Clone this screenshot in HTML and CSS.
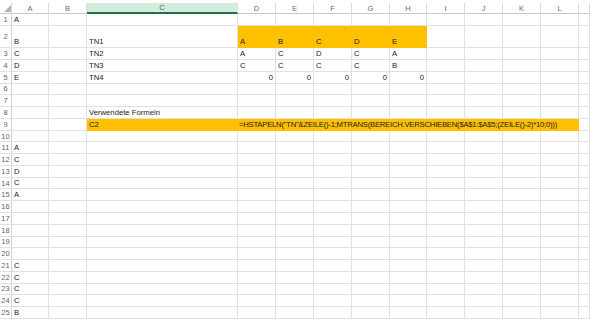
FILE: index.html
```html
<!DOCTYPE html>
<html>
    <head>
        <title>Tabelle1</title>
        <link rel="stylesheet" href="styles.css">
    </head>

    <body>
        <div class="wrap">
            <table class="sheet">
                <colgroup>
                    <col class="w-rh">
                    <col class="w37"><col class="w38"><col class="w151">
                    <col class="w38"><col class="w38"><col class="w38"><col class="w38"><col class="w37">
                    <col class="w38"><col class="w38"><col class="w38"><col class="w38">
                    <col class="w-rest">
                </colgroup>

                <!-- Spaltenköpfe -->
                <tr class="head">
                    <th class="corner">
                        <svg width="7" height="7" viewBox="0 0 7 7"><polygon points="7,0 7,7 0,7" fill="#b4b4b4"/></svg>
                    </th>
                    <th>A</th><th>B</th><th class="sel">C</th><th>D</th><th>E</th><th>F</th>
                    <th>G</th><th>H</th><th>I</th><th>J</th><th>K</th><th>L</th><th></th>
                </tr>

                <tr class="r1"><th>1</th><td>A</td><td></td><td></td><td></td><td></td><td></td><td></td><td></td><td></td><td></td><td></td><td></td><td></td></tr>
                <tr class="r2"><th>2</th><td>B</td><td></td><td>TN1</td>
                    <td class="fill">A</td><td class="fill">B</td><td class="fill">C</td><td class="fill">D</td><td class="fill">E</td>
                    <td></td><td></td><td></td><td></td><td></td></tr>
                <tr><th>3</th><td>C</td><td></td><td>TN2</td><td>A</td><td>C</td><td>D</td><td>C</td><td>A</td><td></td><td></td><td></td><td></td><td></td></tr>
                <tr><th>4</th><td>D</td><td></td><td>TN3</td><td>C</td><td>C</td><td>C</td><td>C</td><td>B</td><td></td><td></td><td></td><td></td><td></td></tr>
                <tr><th>5</th><td>E</td><td></td><td>TN4</td>
                    <td class="num">0</td><td class="num">0</td><td class="num">0</td><td class="num">0</td><td class="num">0</td>
                    <td></td><td></td><td></td><td></td><td></td></tr>
                <tr><th>6</th><td></td><td></td><td></td><td></td><td></td><td></td><td></td><td></td><td></td><td></td><td></td><td></td><td></td></tr>
                <tr><th>7</th><td></td><td></td><td></td><td></td><td></td><td></td><td></td><td></td><td></td><td></td><td></td><td></td><td></td></tr>
                <tr><th>8</th><td></td><td></td><td>Verwendete Formeln</td><td></td><td></td><td></td><td></td><td></td><td></td><td></td><td></td><td></td><td></td></tr>
                <tr><th>9</th><td></td><td></td><td class="fill">C2</td>
                    <td class="fill formula">=HSTAPELN("TN"&amp;ZEILE()-1;MTRANS(BEREICH.VERSCHIEBEN($A$1:$A$5;(ZEILE()-2)*10;0)))</td>
                    <td class="fill"></td><td class="fill"></td><td class="fill"></td><td class="fill"></td>
                    <td class="fill"></td><td class="fill"></td><td class="fill"></td><td class="fill"></td><td></td></tr>
                <tr><th>10</th><td></td><td></td><td></td><td></td><td></td><td></td><td></td><td></td><td></td><td></td><td></td><td></td><td></td></tr>
                <tr><th>11</th><td>A</td><td></td><td></td><td></td><td></td><td></td><td></td><td></td><td></td><td></td><td></td><td></td><td></td></tr>
                <tr><th>12</th><td>C</td><td></td><td></td><td></td><td></td><td></td><td></td><td></td><td></td><td></td><td></td><td></td><td></td></tr>
                <tr><th>13</th><td>D</td><td></td><td></td><td></td><td></td><td></td><td></td><td></td><td></td><td></td><td></td><td></td><td></td></tr>
                <tr><th>14</th><td>C</td><td></td><td></td><td></td><td></td><td></td><td></td><td></td><td></td><td></td><td></td><td></td><td></td></tr>
                <tr><th>15</th><td>A</td><td></td><td></td><td></td><td></td><td></td><td></td><td></td><td></td><td></td><td></td><td></td><td></td></tr>
                <tr><th>16</th><td></td><td></td><td></td><td></td><td></td><td></td><td></td><td></td><td></td><td></td><td></td><td></td><td></td></tr>
                <tr><th>17</th><td></td><td></td><td></td><td></td><td></td><td></td><td></td><td></td><td></td><td></td><td></td><td></td><td></td></tr>
                <tr><th>18</th><td></td><td></td><td></td><td></td><td></td><td></td><td></td><td></td><td></td><td></td><td></td><td></td><td></td></tr>
                <tr><th>19</th><td></td><td></td><td></td><td></td><td></td><td></td><td></td><td></td><td></td><td></td><td></td><td></td><td></td></tr>
                <tr><th>20</th><td></td><td></td><td></td><td></td><td></td><td></td><td></td><td></td><td></td><td></td><td></td><td></td><td></td></tr>
                <tr><th>21</th><td>C</td><td></td><td></td><td></td><td></td><td></td><td></td><td></td><td></td><td></td><td></td><td></td><td></td></tr>
                <tr><th>22</th><td>C</td><td></td><td></td><td></td><td></td><td></td><td></td><td></td><td></td><td></td><td></td><td></td><td></td></tr>
                <tr><th>23</th><td>C</td><td></td><td></td><td></td><td></td><td></td><td></td><td></td><td></td><td></td><td></td><td></td><td></td></tr>
                <tr><th>24</th><td>C</td><td></td><td></td><td></td><td></td><td></td><td></td><td></td><td></td><td></td><td></td><td></td><td></td></tr>
                <tr><th>25</th><td>B</td><td></td><td></td><td></td><td></td><td></td><td></td><td></td><td></td><td></td><td></td><td></td><td></td></tr>
            </table>
        </div><!--wrap-->
    </body>
</html>
```

FILE: styles.css
```css
*{margin:0;padding:0;box-sizing:border-box;}

html, body{
    background: #fff;
    overflow: hidden;
}

.wrap{
    width: 590px;
    height: 320px;
    padding-top: 3px;
    overflow: hidden;
    font-family: "Liberation Sans", Arial, sans-serif;
}

.sheet{
    width: 590px;
    table-layout: fixed;
    border-collapse: separate;
    border-spacing: 0;
    font-size: 7.7px;
    color: #222;
}

.w-rh{ width: 12px; }
.w37{ width: 37px; }
.w38{ width: 38px; }
.w151{ width: 151px; }

/* normale Zellen */
td{
    height: 11.78px;
    padding: 0 2px 1px 2px;
    line-height: 9px;
    vertical-align: bottom;
    white-space: nowrap;
    overflow: visible;
    border-right: 1px solid #e1e1e1;
    border-bottom: 1px solid #e1e1e1;
}

.r1 td, .r1 th{ height: 11.5px; }
.r2 td, .r2 th{ height: 22.8px; }

td.num{ text-align: right; }

td.fill{
    background: #ffc000;
    border-color: #ffc000;
}

/* Formeltext läuft über die Nachbarzellen */
td.formula{
    padding-left: 1px;
    letter-spacing: -0.23px;
}

/* Zeilennummern */
th{
    font-weight: normal;
    color: #666;
    font-size: 7.5px;
    line-height: 9px;
    text-align: center;
    vertical-align: middle;
    white-space: nowrap;
    border-right: 1px solid #d4d4d4;
    border-bottom: 1px solid #e1e1e1;
    height: 11.78px;
}

/* Spaltenköpfe */
.head th{
    height: 11px;
    color: #6b6b6b;
    border-right: 1px solid #dcdcdc;
    border-bottom: 1px solid #c8c8c8;
}

.head th.sel{
    background: #d3ecdc;
    color: #1e6e42;
    border-bottom: 2px solid #217346;
    border-right-color: #d3ecdc;
}

.corner{
    text-align: right;
    vertical-align: bottom;
}

.corner svg{
    display: block;
    margin: 0 0 1px auto;
}
```
